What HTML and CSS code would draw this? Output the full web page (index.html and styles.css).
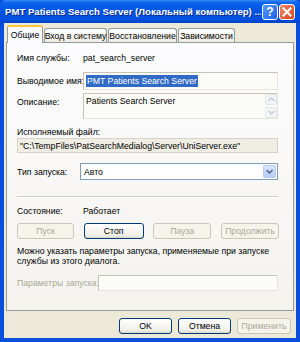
FILE: index.html
```html
<!DOCTYPE html>
<html lang="ru">
<head>
<meta charset="UTF-8" />
<title>PMT Patients Search Server</title>
<link rel="stylesheet" href="styles.css">
</head>
<body>

<div class="window">
  <div class="titlebar">
    <span class="title">PMT Patients Search Server (Локальный компьютер) ...</span>
    <span class="tbtn help">?</span>
    <span class="tbtn close">
      <svg width="10" height="10" viewBox="0 0 10 10"><path d="M1.5 1.5 L8.5 8.5 M8.5 1.5 L1.5 8.5" stroke="#fff" stroke-width="2" stroke-linecap="square"/></svg>
    </span>
  </div>

  <div class="client">
    <div class="tabs">
      <div class="tab active">Общие</div>
      <div class="tab w-login">Вход в систему</div>
      <div class="tab w-restore">Восстановление</div>
      <div class="tab w-deps">Зависимости</div>
    </div>

    <div class="panel">
      <div class="row r-name">
        <span class="label">Имя службы:</span>
        <span>pat_search_server</span>
      </div>

      <div class="row r-display">
        <span class="label">Выводимое имя:</span>
        <div class="field"><span class="selected">PMT Patients Search Server</span></div>
      </div>

      <div class="row r-desc">
        <span class="label top">Описание:</span>
        <div class="field memo">
          <span>Patients Search Server</span>
          <div class="scroll">
            <span class="sbtn"><svg width="7" height="5" viewBox="0 0 7 5"><path d="M0.5 4 L3.5 1 L6.5 4" fill="none" stroke="#c4cbd6" stroke-width="1.4"/></svg></span>
            <span class="sbtn"><svg width="7" height="5" viewBox="0 0 7 5"><path d="M0.5 1 L3.5 4 L6.5 1" fill="none" stroke="#c4cbd6" stroke-width="1.4"/></svg></span>
          </div>
        </div>
      </div>

      <div class="caption">Исполняемый файл:</div>
      <div class="field path">"C:\TempFiles\PatSearchMedialog\Server\UniServer.exe"</div>

      <div class="row r-start">
        <span class="label short">Тип запуска:</span>
        <div class="field combo">
          <span>Авто</span>
          <span class="drop"><svg width="7" height="5" viewBox="0 0 7 5"><path d="M0.5 1 L3.5 4 L6.5 1" fill="none" stroke="#4d6185" stroke-width="1.5"/></svg></span>
        </div>
      </div>

      <div class="sep"></div>

      <div class="row r-state">
        <span class="label">Состояние:</span>
        <span>Работает</span>
      </div>

      <div class="buttons">
        <span class="btn disabled">Пуск</span>
        <span class="btn">Стоп</span>
        <span class="btn disabled">Пауза</span>
        <span class="btn disabled">Продолжить</span>
      </div>

      <p class="hint">Можно указать параметры запуска, применяемые при запуске<br>службы из этого диалога.</p>

      <div class="row r-params">
        <span class="label wide muted">Параметры запуска:</span>
        <div class="field"></div>
      </div>
    </div>

    <div class="footer">
      <span class="btn">OK</span>
      <span class="btn">Отмена</span>
      <span class="btn disabled">Применить</span>
    </div>
  </div>
</div>

</body>
</html>
```

FILE: styles.css
```css
body {
  margin: 0;
  font-family: "Liberation Sans", Arial, sans-serif;
  font-size: 8.7px;
  color: #000;
}
.window {
  width: 300px;
  height: 342px;
  box-sizing: border-box;
  background: #0a4fdc;
  padding: 0 4px 4px 4px;
  display: flex;
  flex-direction: column;
}
.titlebar {
  height: 23px;
  margin: 0 -4px;
  padding: 0 5px 0 5px;
  display: flex;
  align-items: center;
  background: linear-gradient(#3b8cf5 0%, #0a63ec 12%, #0053e4 50%, #0050df 85%, #0040c8 100%);
  border-radius: 6px 6px 0 0;
}
.title {
  flex: 1;
  min-width: 0;
  color: #fff;
  font-weight: bold;
  font-size: 9.6px;
  white-space: nowrap;
  overflow: hidden;
  text-shadow: 1px 1px 0 #0a2a8a;
}
.tbtn {
  flex: none;
  width: 16px;
  height: 16px;
  box-sizing: border-box;
  border: 1px solid #fff;
  border-radius: 3px;
  display: flex;
  align-items: center;
  justify-content: center;
  color: #fff;
  font-weight: bold;
  font-size: 12px;
  margin-left: 1px;
}
.help {
  background: linear-gradient(135deg, #5c9bff, #1a5ee8);
}
.close {
  background: linear-gradient(135deg, #f08a6a, #d9431c);
}
.client {
  flex: 1;
  background: #ece9d8;
  display: flex;
  flex-direction: column;
  padding: 2px 2px 0 2px;
}
.tabs {
  display: flex;
  height: 17px;
  align-items: flex-end;
  padding-left: 1px;
}
.tab {
  height: 14px;
  box-sizing: border-box;
  border: 1px solid #919b9c;
  border-bottom: none;
  border-radius: 3px 3px 0 0;
  background: linear-gradient(#fff, #eceae2);
  display: flex;
  align-items: center;
  justify-content: center;
  margin-right: 1px;
  white-space: nowrap;
}
.tab.active {
  position: relative;
  z-index: 1;
  height: 18px;
  width: 36px;
  margin-bottom: -1px;
  background: #fcfcfe;
  border-top: 2px solid #ffc83c;
}
.w-login { width: 63px; }
.w-restore { width: 69px; }
.w-deps { width: 57px; }
.panel {
  height: 269px;
  width: 288px;
  box-sizing: border-box;
  border: 1px solid #919b9c;
  background: linear-gradient(#fcfcfe, #f4f3ee);
  padding: 0 15px 0 10px;
  display: flex;
  flex-direction: column;
}
.row {
  display: flex;
  align-items: center;
}
.label {
  width: 66px;
  flex: none;
  white-space: nowrap;
}
.label.short { width: 63px; }
.label.wide { width: 81px; }
.label.top { align-self: flex-start; padding-top: 4px; }
.muted { color: #aca899; }
.r-name { margin-top: 8px; height: 14px; }
.r-display { margin-top: 7px; height: 18px; }
.r-desc { margin-top: 3px; height: 26px; }
.r-start { margin-top: 10px; height: 17px; }
.r-state { margin-top: 6px; height: 14px; }
.r-params { margin-top: 9px; height: 16px; }
.field {
  flex: 1;
  height: 100%;
  box-sizing: border-box;
  border: 1px solid #7f9db9;
  background: #fff;
  display: flex;
  align-items: center;
  padding: 0 2px;
  white-space: nowrap;
  overflow: hidden;
}
.r-display .field,
.r-desc .field,
.r-params .field {
  border-color: #c6c3b8 #e6e4dc #e6e4dc #c6c3b8;
  background: #fbfbf8;
}
.selected {
  background: #316ac5;
  color: #fff;
  padding: 1px 1px;
}
.memo {
  align-items: flex-start;
  padding-top: 2px;
  padding-right: 0;
}
.memo > span:first-child { flex: 1; }
.scroll {
  width: 12px;
  display: flex;
  flex-direction: column;
  justify-content: space-between;
  height: 24px;
  margin-top: -2px;
}
.sbtn {
  height: 11px;
  box-sizing: border-box;
  border: 1px solid #e4e6ea;
  border-radius: 2px;
  background: #f3f4f6;
  display: flex;
  align-items: center;
  justify-content: center;
}
.caption {
  margin-top: 7px;
  height: 12px;
  line-height: 12px;
  white-space: nowrap;
}
.path {
  flex: none;
  height: 15px;
  background: #efede4;
  border-color: #d6d3c8;
}
.combo {
  padding-right: 1px;
}
.combo > span:first-child { flex: 1; padding-left: 1px; }
.drop {
  width: 13px;
  height: 13px;
  box-sizing: border-box;
  border: 1px solid #b9cbef;
  border-radius: 2px;
  background: linear-gradient(#d8e4fb, #b7cbf5);
  display: flex;
  align-items: center;
  justify-content: center;
}
.sep {
  margin-top: 16px;
  height: 1px;
  background: #d0cec3;
  border-bottom: 1px solid #fff;
}
.buttons {
  margin-top: 5px;
  height: 16px;
  display: flex;
  justify-content: space-between;
  margin-right: -1px;
}
.btn {
  width: 58px;
  height: 16px;
  box-sizing: border-box;
  border: 1px solid #003c74;
  border-radius: 3px;
  background: linear-gradient(#ffffff, #f0efe8 80%, #dcd9cc);
  display: flex;
  align-items: center;
  justify-content: center;
  white-space: nowrap;
}
.btn.disabled {
  border-color: #c9c7ba;
  background: #f5f4ea;
  color: #aca899;
}
.buttons .btn:first-child { width: 57px; }
.buttons .btn:nth-child(2) { width: 60px; }
.hint {
  margin: 7px 0 0 0;
  line-height: 10px;
  white-space: nowrap;
}
.footer {
  display: flex;
  justify-content: flex-end;
  gap: 6px;
  margin-top: 7px;
  padding-right: 3px;
}
.footer .btn { width: 53px; }
.footer .btn:last-child { width: 54px; }
```
